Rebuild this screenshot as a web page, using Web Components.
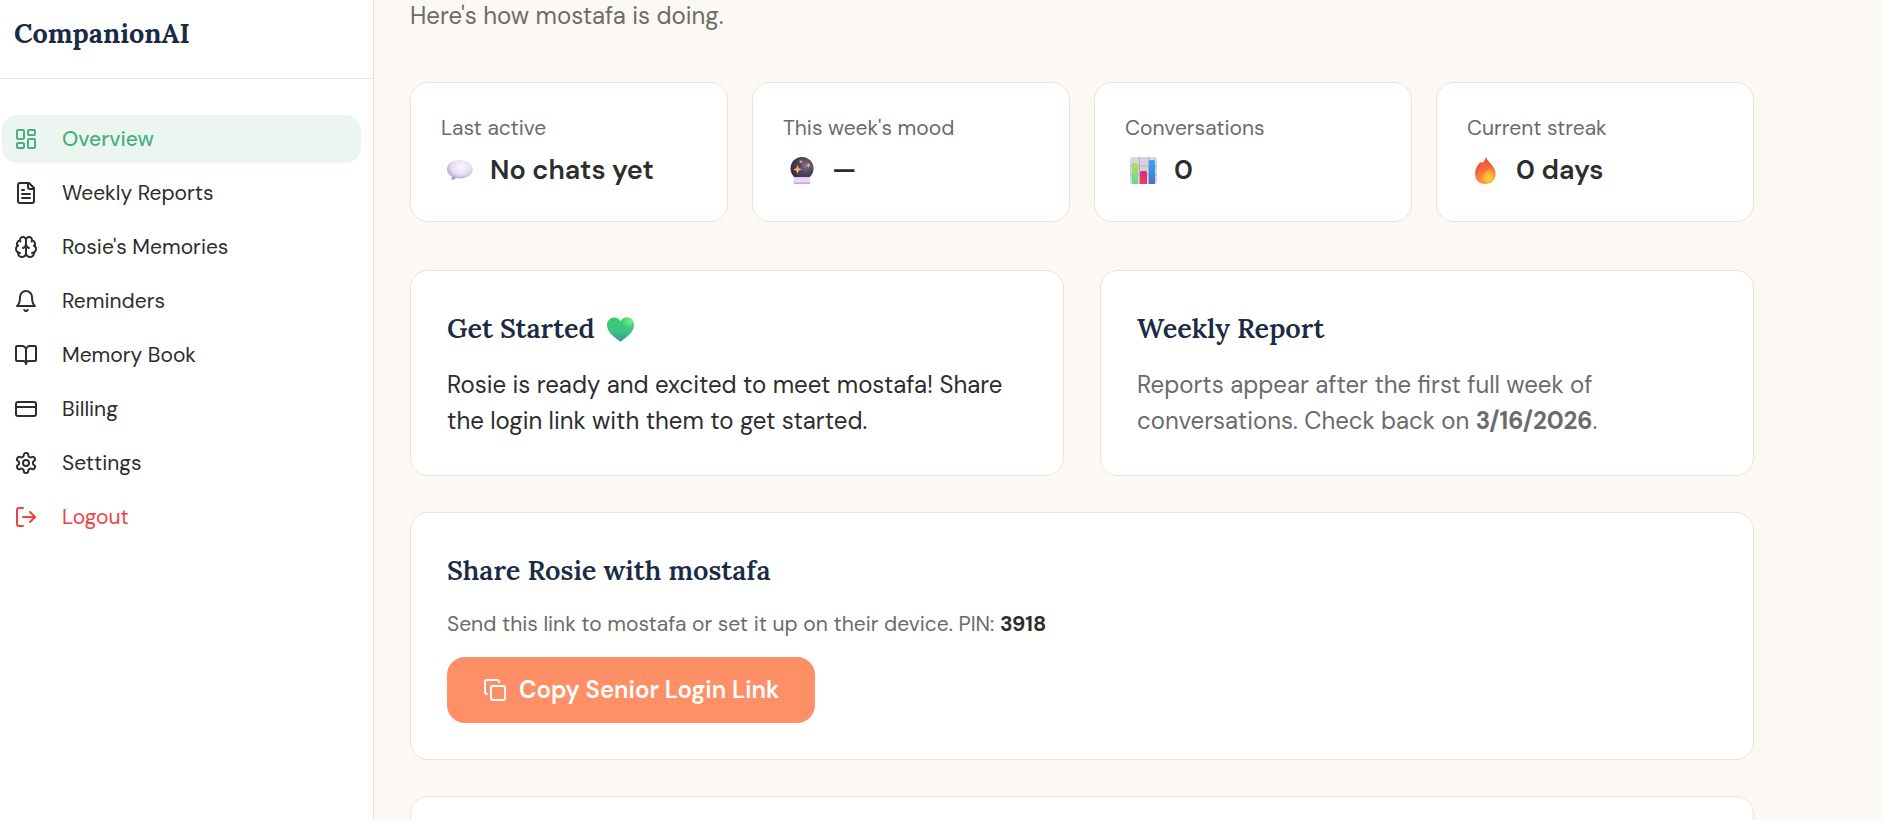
<!DOCTYPE html>
<html lang="en">
<head>
<meta charset="utf-8">
<meta name="viewport" content="width=device-width, initial-scale=1">
<title>CompanionAI</title>
<style>
    body {
        --ink: #2d2d2d;
        --muted: #6b6b6b;
        --navy: #1a2b45;
        --green: #4caf82;
        --line: #e8e4dc;
        --serif: "Lora", "Liberation Serif", serif;
        margin: 0;
        background: #fcf9f4;
        color: var(--ink);
        font-family: "DM Sans", Inter, sans-serif;
        font-size: 24px;
        line-height: 36px;
    }
</style>
</head>
<body>

<!-- line icons, 24 x 24 -->
<template id="icon-overview"><svg viewBox="0 0 24 24"><rect width="7" height="9" x="3" y="3" rx="1"/><rect width="7" height="5" x="14" y="3" rx="1"/><rect width="7" height="9" x="14" y="12" rx="1"/><rect width="7" height="5" x="3" y="16" rx="1"/></svg></template>
<template id="icon-report"><svg viewBox="0 0 24 24"><path d="M15 2H6a2 2 0 0 0-2 2v16a2 2 0 0 0 2 2h12a2 2 0 0 0 2-2V7Z"/><path d="M14 2v4a2 2 0 0 0 2 2h4"/><path d="M10 9H8"/><path d="M16 13H8"/><path d="M16 17H8"/></svg></template>
<template id="icon-brain"><svg viewBox="0 0 24 24"><path d="M12 5a3 3 0 1 0-5.997.125 4 4 0 0 0-2.526 5.77 4 4 0 0 0 .556 6.588A4 4 0 1 0 12 18Z"/><path d="M12 5a3 3 0 1 1 5.997.125 4 4 0 0 1 2.526 5.77 4 4 0 0 1-.556 6.588A4 4 0 1 1 12 18Z"/><path d="M15 13a4.5 4.5 0 0 1-3-4 4.5 4.5 0 0 1-3 4"/><path d="M17.599 6.5a3 3 0 0 0 .399-1.375"/><path d="M6.003 5.125A3 3 0 0 0 6.401 6.5"/><path d="M3.477 10.896a4 4 0 0 1 .585-.396"/><path d="M19.938 10.5a4 4 0 0 1 .585.396"/><path d="M6 18a4 4 0 0 1-1.967-.516"/><path d="M19.967 17.484A4 4 0 0 1 18 18"/></svg></template>
<template id="icon-bell"><svg viewBox="0 0 24 24"><path d="M6 8a6 6 0 0 1 12 0c0 7 3 9 3 9H3s3-2 3-9"/><path d="M10.3 21a1.94 1.94 0 0 0 3.4 0"/></svg></template>
<template id="icon-book"><svg viewBox="0 0 24 24"><path d="M12 7v14"/><path d="M3 18a1 1 0 0 1-1-1V4a1 1 0 0 1 1-1h5a4 4 0 0 1 4 4 4 4 0 0 1 4-4h5a1 1 0 0 1 1 1v13a1 1 0 0 1-1 1h-6a3 3 0 0 0-3 3 3 3 0 0 0-3-3z"/></svg></template>
<template id="icon-card"><svg viewBox="0 0 24 24"><rect width="20" height="14" x="2" y="5" rx="2"/><path d="M2 10h20"/></svg></template>
<template id="icon-settings"><svg viewBox="0 0 24 24"><path d="M12.22 2h-.44a2 2 0 0 0-2 2v.18a2 2 0 0 1-1 1.73l-.43.25a2 2 0 0 1-2 0l-.15-.08a2 2 0 0 0-2.73.73l-.22.38a2 2 0 0 0 .73 2.73l.15.1a2 2 0 0 1 1 1.72v.51a2 2 0 0 1-1 1.74l-.15.09a2 2 0 0 0-.73 2.73l.22.38a2 2 0 0 0 2.73.73l.15-.08a2 2 0 0 1 2 0l.43.25a2 2 0 0 1 1 1.73V20a2 2 0 0 0 2 2h.44a2 2 0 0 0 2-2v-.18a2 2 0 0 1 1-1.73l.43-.25a2 2 0 0 1 2 0l.15.08a2 2 0 0 0 2.73-.73l.22-.39a2 2 0 0 0-.73-2.73l-.15-.08a2 2 0 0 1-1-1.74v-.5a2 2 0 0 1 1-1.74l.15-.09a2 2 0 0 0 .73-2.73l-.22-.38a2 2 0 0 0-2.73-.73l-.15.08a2 2 0 0 1-2 0l-.43-.25a2 2 0 0 1-1-1.73V4a2 2 0 0 0-2-2z"/><circle cx="12" cy="12" r="3"/></svg></template>
<template id="icon-logout"><svg viewBox="0 0 24 24"><path d="M9 21H5a2 2 0 0 1-2-2V5a2 2 0 0 1 2-2h4"/><path d="m16 17 5-5-5-5"/><path d="M21 12H9"/></svg></template>
<template id="icon-copy"><svg viewBox="0 0 24 24"><rect width="14" height="14" x="8" y="8" rx="2"/><path d="M4 16c-1.1 0-2-.9-2-2V4c0-1.1.9-2 2-2h10c1.1 0 2 .9 2 2"/></svg></template>

<!-- emoji, 27 x 27 -->
<template id="emoji-chat"><svg viewBox="0 0 27 27">
    <defs>
        <radialGradient id="b" cx=".55" cy=".35" r=".65"><stop offset="0" stop-color="#faf8fc"/><stop offset=".6" stop-color="#e6ddf0"/><stop offset="1" stop-color="#ab90d0"/></radialGradient>
    </defs>
    <path d="M14 3C6.600 3 1 6.800 1 12c0 3.200 1.800 5.800 4.700 7.400.2 1.500.1 2.700-.5 3.700 2 .1 3.700-.7 5-2 1.200.2 2.500.4 3.800.4 7.200 0 12.700-4.300 12.700-9.500S21.200 3 14 3z" fill="url(#b)"/>
</svg></template>
<template id="emoji-crystal"><svg viewBox="-2 0 27 27">
    <defs>
        <radialGradient id="g" cx=".68" cy=".38" r=".65"><stop offset="0" stop-color="#857c93"/><stop offset=".45" stop-color="#514860"/><stop offset="1" stop-color="#3a2b4b"/></radialGradient>
        <linearGradient id="s" x1="0" x2="0" y1="0" y2="1"><stop offset="0" stop-color="#d8cde9"/><stop offset=".6" stop-color="#eadff3"/><stop offset="1" stop-color="#cb91e3"/></linearGradient>
    </defs>
    <circle cx="12" cy="11.500" r="11.500" fill="url(#g)"/>
    <path d="M4.500 20h15l1 5.500c.1.900-.4 1.500-1.300 1.500H4.800c-.9 0-1.400-.6-1.300-1.500z" fill="url(#s)"/>
    <path d="M7.500 8l1.200 3.300L12 12.500l-3.300 1.200L7.500 17l-1.200-3.300L3 12.500l3.300-1.200zM11 2.600l.6 1.500 1.500.6-1.500.6-.6 1.500-.6-1.500-1.500-.6 1.500-.6zM18.500 5.800l.7 1.800 1.800.7-1.800.7-.7 1.800-.7-1.800-1.800-.7 1.800-.7z" fill="#ffb554"/>
</svg></template>
<template id="emoji-chart"><svg viewBox="0 0 27 27">
    <defs>
        <linearGradient id="g" x1="0" x2="0" y1="0" y2="1"><stop offset="0" stop-color="#b3e052"/><stop offset="1" stop-color="#5edb9b"/></linearGradient>
        <linearGradient id="r" x1="0" x2="0" y1="0" y2="1"><stop offset="0" stop-color="#d72c7e"/><stop offset="1" stop-color="#f23c67"/></linearGradient>
        <linearGradient id="b" x1="0" x2="0" y1="0" y2="1"><stop offset="0" stop-color="#31a8f3"/><stop offset="1" stop-color="#4473cc"/></linearGradient>
    </defs>
    <rect width="27" height="27" rx="3" fill="#d9d1df"/>
    <path d="M9.500 0v27M18.500 0v27M0 9h27M0 18h27" stroke="#b8aec2"/>
    <path d="M2 7.500A1.500 1.500 0 0 1 3.500 6h3A1.500 1.500 0 0 1 8 7.500V27H2z" fill="url(#g)"/>
    <path d="M10 15.500A1.500 1.500 0 0 1 11.500 14h4a1.500 1.500 0 0 1 1.500 1.500V27h-7z" fill="url(#r)"/>
    <path d="M19 4.500A1.500 1.500 0 0 1 20.500 3h3A1.500 1.500 0 0 1 25 4.500V27h-6z" fill="url(#b)"/>
</svg></template>
<template id="emoji-fire"><svg viewBox="0 0 27 27">
    <defs>
        <linearGradient id="o" x1="0" x2="0" y1="0" y2="1"><stop offset="0" stop-color="#f0443f"/><stop offset=".55" stop-color="#fa7340"/><stop offset="1" stop-color="#ff9a45"/></linearGradient>
        <radialGradient id="y" cx=".62" cy=".72" r=".65"><stop offset="0" stop-color="#ffd43a"/><stop offset=".5" stop-color="#ffad35"/><stop offset="1" stop-color="#fa7038"/></radialGradient>
    </defs>
    <path d="M14 0c1 3.500 3.500 5 6 8.300 2.400 3 3.500 5.500 3.500 8.700 0 6-4.300 10-10.300 10C7 27 3 23 3 17.200c0-3.600 1-6.500 3-9.400.5-.8 1.700-2.500 2.900-2.900.8-.2.900.7.700 1.600C12.300 4.700 13 2.500 14 0z" fill="url(#o)"/>
    <path d="M9 6.500c-2.500 3.200-4 6.300-4.200 10.500" stroke="#d8473f" fill="none"/>
    <path d="M17.500 9c3 3 5 6 5 9.500 0 4.500-3.800 7.700-8.800 7.700S7 23 7.500 18.500c.2-2.300 1.700-4.200 3-5.700 0 1.700.2 2.700 1 3.700C14 14 17 13 17.500 9z" fill="url(#y)"/>
</svg></template>
<template id="emoji-heart"><svg viewBox="0 -1 27 27">
    <defs>
        <linearGradient id="h" x1="0" x2="0" y1="0" y2="1"><stop offset="0" stop-color="#35cf68"/><stop offset=".6" stop-color="#3cc486"/><stop offset="1" stop-color="#3b8e93"/></linearGradient>
        <radialGradient id="l" cx=".85" cy=".15" r=".3"><stop offset="0" stop-color="#72f28c"/><stop offset="1" stop-color="#72f28c" stop-opacity="0"/></radialGradient>
    </defs>
    <path d="M13.500 5.200C11.800 2.600 9.600 1.500 7.300 1.500 3.200 1.500 0 4.800 0 9c0 7.600 7.800 12.400 12.400 16 .7.600 1.500.6 2.200 0C19.200 21.400 27 16.600 27 9c0-4.200-3.200-7.500-7.300-7.500-2.300 0-4.500 1.100-6.200 3.700z" fill="url(#h)"/>
    <path d="M13.500 5.200C11.800 2.600 9.600 1.500 7.300 1.500 3.200 1.500 0 4.800 0 9c0 7.600 7.800 12.400 12.400 16 .7.600 1.500.6 2.200 0C19.200 21.400 27 16.600 27 9c0-4.200-3.200-7.500-7.300-7.500-2.300 0-4.500 1.100-6.200 3.700z" fill="url(#l)"/>
</svg></template>

<template id="line-icon">
    <style>
        :host { display: block; flex: none; width: 24px; height: 24px; }
        svg {
            display: block;
            fill: none;
            stroke: currentColor;
            stroke-width: 2;
            stroke-linecap: round;
            stroke-linejoin: round;
        }
    </style>
</template>

<template id="emoji-icon">
    <style>
        :host { display: block; flex: none; width: 27px; height: 27px; }
        svg { display: block; }
    </style>
</template>

<template id="nav-item">
    <style>
        :host { display: block; }
        a {
            display: flex;
            align-items: center;
            gap: 24px;
            padding: 9px 12px;
            border-radius: 15px;
            color: var(--ink);
            font-size: 21px;
            line-height: 30px;
            text-decoration: none;
        }
        :host([active]) a { background: #ecf6f1; color: var(--green); font-weight: 500; }
        :host([danger]) a { color: #ef4444; }
    </style>
    <a href="#"><slot name="icon"></slot><slot></slot></a>
</template>

<template id="side-bar">
    <style>
        :host {
            display: block;
            box-sizing: border-box;
            flex: none;
            width: 374px;
            background: #fff;
            border-right: 1px solid var(--line);
        }
        header {
            padding: 12px 14px 24px;
            border-bottom: 1px solid var(--line);
            color: var(--navy);
            font: bold 27px/42px var(--serif);
        }
        nav {
            display: flex;
            flex-direction: column;
            gap: 6px;
            padding: 36px 12px 36px 2px;
        }
    </style>
    <header><slot name="brand"></slot></header>
    <nav><slot></slot></nav>
</template>

<template id="stat-card">
    <style>
        :host {
            display: block;
            padding: 30px;
            background: #fff;
            border: 1px solid var(--line);
            border-radius: 18px;
        }
        .label { color: var(--muted); font-size: 21px; line-height: 30px; }
        .value {
            display: flex;
            align-items: center;
            gap: 17px;
            margin-top: 6px;
            padding-left: 5px;
            font-size: 27px;
            font-weight: 600;
            line-height: 42px;
        }
    </style>
    <div class="label"><slot name="label"></slot></div>
    <div class="value"><slot name="emoji"></slot><slot></slot></div>
</template>

<template id="panel-card">
    <style>
        :host {
            display: block;
            padding: 36px;
            background: #fff;
            border: 1px solid var(--line);
            border-radius: 18px;
        }
        h2 {
            display: flex;
            align-items: center;
            gap: 12px;
            min-height: 42px;
            margin: 0 0 18px;
            color: var(--navy);
            font: 600 27px/42px var(--serif);
        }
    </style>
    <h2><slot name="title"></slot></h2>
    <slot></slot>
</template>

<template id="copy-button">
    <style>
        :host { display: block; }
        button {
            display: flex;
            align-items: center;
            gap: 12px;
            padding: 15px 36px;
            border: 0;
            border-radius: 18px;
            background: #ff8f66;
            color: #fff;
            font: inherit;
            font-weight: 600;
            cursor: pointer;
        }
    </style>
    <button type="button"><line-icon name="copy"></line-icon><slot></slot></button>
</template>

<template id="companion-app">
    <style>
        :host { display: flex; min-height: 100vh; }
        main {
            flex: 1;
            display: flex;
            flex-direction: column;
            gap: 36px;
            max-width: 1344px;
            padding: 0 36px;
        }
        p { margin: 0; }
        .intro { margin-bottom: 14px; color: var(--muted); line-height: 32px; }
        .stats { display: grid; grid-template-columns: repeat(4, 1fr); gap: 24px; margin-bottom: 12px; }
        .panels { display: grid; grid-template-columns: repeat(2, 1fr); gap: 36px; }
        .muted { color: var(--muted); }
        .small { margin-bottom: 18px; font-size: 21px; line-height: 30px; }
        .small strong { color: var(--ink); }
    </style>
    <side-bar>
        <span slot="brand">CompanionAI</span>
        <nav-item active><line-icon slot="icon" name="overview"></line-icon>Overview</nav-item>
        <nav-item><line-icon slot="icon" name="report"></line-icon>Weekly Reports</nav-item>
        <nav-item><line-icon slot="icon" name="brain"></line-icon>Rosie's Memories</nav-item>
        <nav-item><line-icon slot="icon" name="bell"></line-icon>Reminders</nav-item>
        <nav-item><line-icon slot="icon" name="book"></line-icon>Memory Book</nav-item>
        <nav-item><line-icon slot="icon" name="card"></line-icon>Billing</nav-item>
        <nav-item><line-icon slot="icon" name="settings"></line-icon>Settings</nav-item>
        <nav-item danger><line-icon slot="icon" name="logout"></line-icon>Logout</nav-item>
    </side-bar>
    <main>
        <p class="intro">Here's how mostafa is doing.</p>
        <section class="stats">
            <stat-card>
                <span slot="label">Last active</span>
                <emoji-icon slot="emoji" name="chat"></emoji-icon>
                <span>No chats yet</span>
            </stat-card>
            <stat-card>
                <span slot="label">This week's mood</span>
                <emoji-icon slot="emoji" name="crystal"></emoji-icon>
                <span>&mdash;</span>
            </stat-card>
            <stat-card>
                <span slot="label">Conversations</span>
                <emoji-icon slot="emoji" name="chart"></emoji-icon>
                <span>0</span>
            </stat-card>
            <stat-card>
                <span slot="label">Current streak</span>
                <emoji-icon slot="emoji" name="fire"></emoji-icon>
                <span>0 days</span>
            </stat-card>
        </section>
        <section class="panels">
            <panel-card>
                <span slot="title">Get Started</span>
                <emoji-icon slot="title" name="heart"></emoji-icon>
                <p>Rosie is ready and excited to meet mostafa! Share the login link with them to get started.</p>
            </panel-card>
            <panel-card>
                <span slot="title">Weekly Report</span>
                <p class="muted">Reports appear after the first full week of conversations. Check back on <strong>3/16/2026</strong>.</p>
            </panel-card>
        </section>
        <panel-card>
            <span slot="title">Share Rosie with mostafa</span>
            <p class="muted small">Send this link to mostafa or set it up on their device. PIN: <strong>3918</strong></p>
            <copy-button>Copy Senior Login Link</copy-button>
        </panel-card>
        <panel-card></panel-card>
    </main>
</template>

<companion-app></companion-app>

<script>
function cloneTemplate(id) {
    return document.getElementById(id).content.cloneNode(true);
}

class TemplateElement extends HTMLElement {
    constructor() {
        super();
        this.attachShadow({mode: "open"});
        this.shadowRoot.appendChild(cloneTemplate(this.localName));
    }
}

class LineIcon extends TemplateElement {
    connectedCallback() {
        this.shadowRoot.appendChild(cloneTemplate("icon-" + this.getAttribute("name")));
    }
}

class EmojiIcon extends TemplateElement {
    connectedCallback() {
        this.shadowRoot.appendChild(cloneTemplate("emoji-" + this.getAttribute("name")));
    }
}

class NavItem extends TemplateElement {}
class SideBar extends TemplateElement {}
class StatCard extends TemplateElement {}
class PanelCard extends TemplateElement {}
class CopyButton extends TemplateElement {}
class CompanionApp extends TemplateElement {}

window.customElements.define("line-icon", LineIcon);
window.customElements.define("emoji-icon", EmojiIcon);
window.customElements.define("nav-item", NavItem);
window.customElements.define("side-bar", SideBar);
window.customElements.define("stat-card", StatCard);
window.customElements.define("panel-card", PanelCard);
window.customElements.define("copy-button", CopyButton);
window.customElements.define("companion-app", CompanionApp);
</script>
</body>
</html>
